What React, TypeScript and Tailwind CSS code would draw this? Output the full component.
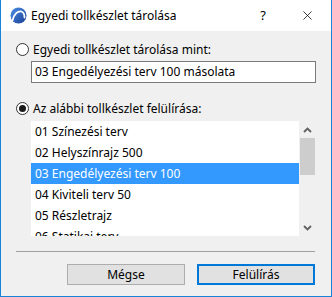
import { X } from 'lucide-react';

const ITEMS = [
    '01 Színezési terv',
    '02 Helyszínrajz 500',
    '03 Engedélyezési terv 100',
    '04 Kiviteli terv 50',
    '05 Részletrajz',
    '06 Statikai terv',
];

function Radio({ checked }: { checked?: boolean }) {
    return (
        <span className="flex h-[13px] w-[13px] shrink-0 items-center justify-center rounded-full border border-[#333] bg-white">
            {checked && <span className="h-[7px] w-[7px] rounded-full bg-[#1a1a1a]" />}
        </span>
    );
}

function AppIcon() {
    return (
        <svg width="17" height="17" viewBox="0 0 17 17">
            <defs>
                <linearGradient id="g" x1="0" y1="0" x2="1" y2="1">
                    <stop offset="0" stopColor="#4f8fe6" />
                    <stop offset="1" stopColor="#173f95" />
                </linearGradient>
            </defs>
            <circle cx="8.5" cy="8.5" r="8" fill="url(#g)" />
            <path d="M2.5 13.5 C4 7 8 3.5 11.5 4.5 C13.5 5.2 14.5 7.5 14.5 10.5" fill="none" stroke="#fff" strokeWidth="1.8" strokeLinecap="round" />
        </svg>
    );
}

function Chevron({ up }: { up?: boolean }) {
    return (
        <svg width="9" height="6" viewBox="0 0 9 6">
            <path d={up ? 'M1 5 L4.5 1.5 L8 5' : 'M1 1 L4.5 4.5 L8 1'} fill="none" stroke="#606060" strokeWidth="1.8" />
        </svg>
    );
}

export default function App() {
    return (
        <div
            className="flex h-[297px] w-[332px] flex-col border-x border-b border-[#1883d7] bg-[#f0f0f0] text-[12px] text-black"
            style={{ fontFamily: '"Noto Sans", "Open Sans", sans-serif' }}
        >
            {/* title bar */}
            <div className="flex h-[31px] shrink-0 items-center bg-white pl-[9px]">
                <AppIcon />
                <span className="ml-[4px] flex-1 text-[12px]">Egyedi tollkészlet tárolása</span>
                <span className="mr-[34px] text-[13px]">?</span>
                <X className="mr-[16px] h-[15px] w-[15px]" strokeWidth={1.2} />
            </div>

            <div className="flex flex-col pl-[15px]">
                <label className="mt-[12px] flex h-[13px] items-center gap-[4px]">
                    <Radio />
                    <span className="leading-none">Egyedi tollkészlet tárolása mint:</span>
                </label>

                <div className="mt-[5px] ml-[15px] flex h-[22px] w-[285px] items-center border border-[#7a7a7a] bg-white px-[3px]">
                    03 Engedélyezési terv 100 másolata
                </div>

                <label className="mt-[19px] flex h-[13px] items-center gap-[4px]">
                    <Radio checked />
                    <span className="leading-none">Az alábbi tollkészlet felülírása:</span>
                </label>

                <div className="mt-[6px] ml-[15px] flex h-[115px] w-[285px]">
                    <div className="flex-1 overflow-hidden bg-white">
                        {ITEMS.map((it, i) => (
                            <div
                                key={it}
                                className={`flex h-[21px] items-center pl-[4px] ${i === 2 ? 'bg-[#3399ff] text-white' : ''}`}
                            >
                                {it}
                            </div>
                        ))}
                    </div>
                    <div className="flex w-[17px] flex-col items-center">
                        <div className="flex h-[17px] w-full items-center justify-center">
                            <Chevron up />
                        </div>
                        <div className="w-full flex-1">
                            <div className="ml-px h-[37px] w-[15px] bg-[#cdcdcd]" />
                        </div>
                        <div className="flex h-[17px] w-full items-center justify-center">
                            <Chevron />
                        </div>
                    </div>
                </div>

                <div className="mt-[15px] h-px w-[299px] bg-[#a0a0a0]" />

                <div className="mt-[12px] flex w-[299px] justify-end gap-[12px]">
                    <button className="h-[21px] w-[118px] border border-[#adadad] bg-[#e1e1e1]">Mégse</button>
                    <button className="h-[21px] w-[118px] border-2 border-[#0078d7] bg-[#e1e1e1]">Felülírás</button>
                </div>
            </div>
        </div>
    );
}
